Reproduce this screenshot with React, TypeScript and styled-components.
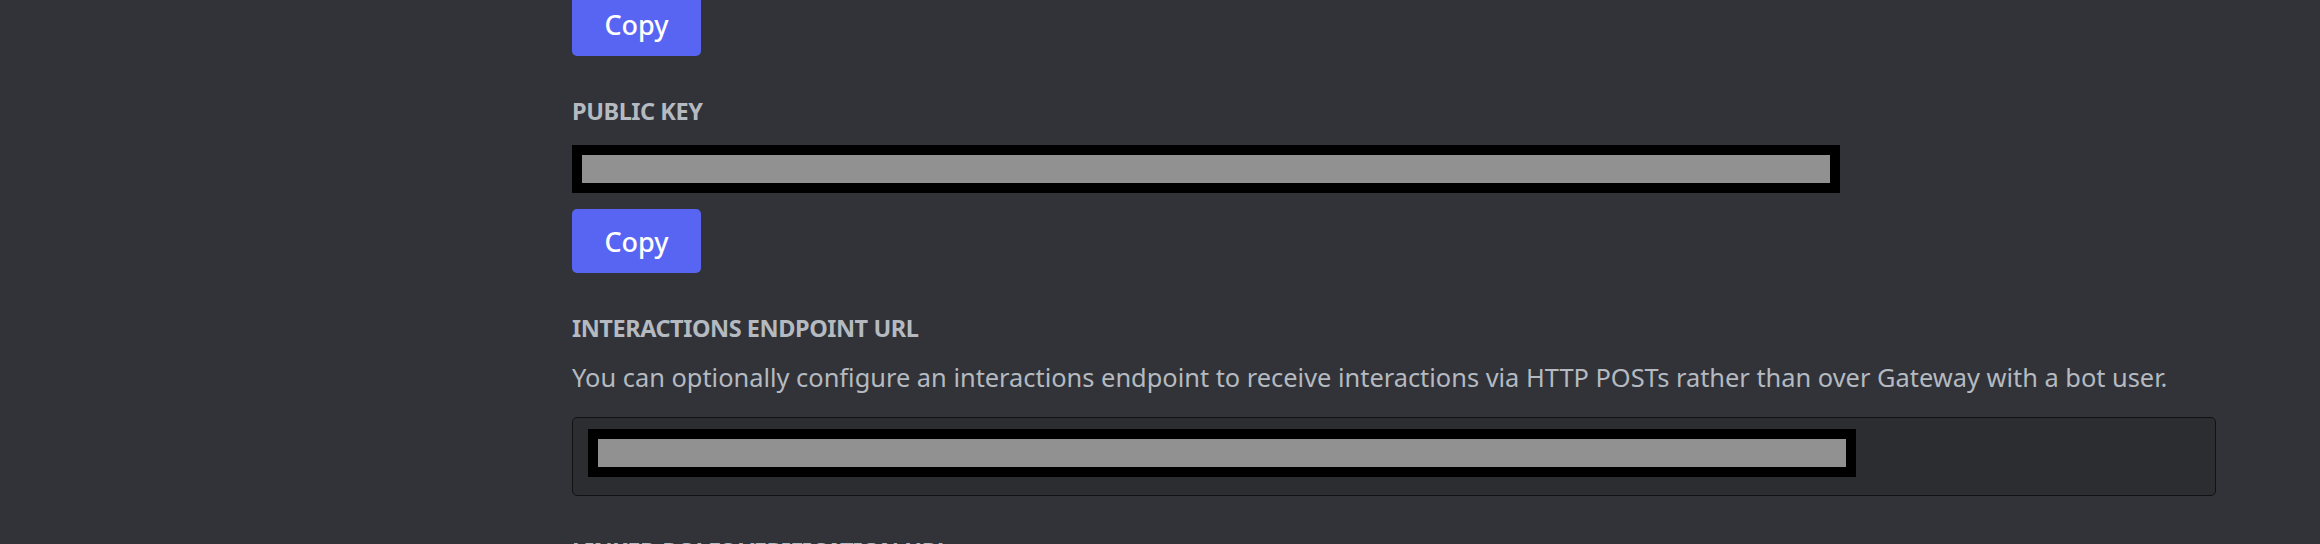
import React from 'react';
import styled, {createGlobalStyle} from "styled-components";

const GlobalStyle = createGlobalStyle`
    html, body {
        margin: 0;
        padding: 0;
        background: #313338;
    }
    body {
        font-family: "Noto Sans", "Liberation Sans", sans-serif;
        overflow: hidden;
    }
`

const Page = styled.main`
    min-height: 100vh;
    background: #313338;
    padding: 0 104px 0 572px;
    box-sizing: border-box;
    overflow: hidden;
`

const Content = styled.div`
    display: flex;
    flex-direction: column;
    align-items: stretch;
    margin-top: -8px;
`

const Field = styled.section`
    display: flex;
    flex-direction: column;
    align-items: flex-start;
    margin-top: 41px;
`

const Label = styled.h3`
    margin: 0;
    font-size: 23.5px;
    line-height: 28px;
    font-weight: 700;
    letter-spacing: -0.45px;
    color: #b5bac1;
    text-transform: uppercase;
    white-space: nowrap;
`

const Description = styled.p`
    margin: 19px 0 0;
    font-size: 25.4px;
    line-height: 32px;
    font-weight: 400;
    color: #b5bac1;
    white-space: nowrap;
`

const CopyButton = styled.button`
    width: 129px;
    height: 64px;
    padding: 0;
    border: none;
    border-radius: 5px;
    background: #5865f2;
    color: #ffffff;
    font-family: "Noto Sans", "Liberation Sans", sans-serif;
    font-size: 27px;
    font-weight: 500;
    cursor: pointer;
    margin-top: ${({$gap}: {$gap?: number}) => ($gap ?? 0)}px;
`

// black box with grey fill, covers the secret values in the screenshot
const Redacted = styled.div`
    width: 1268px;
    height: 48px;
    box-sizing: border-box;
    border: 10px solid #000000;
    background: #919191;
    flex-shrink: 0;
`

const KeyRow = styled.div`
    margin-top: 20px;
`

const InputShell = styled.div`
    align-self: stretch;
    margin-top: 24px;
    height: 79px;
    box-sizing: border-box;
    padding: 11px 15px 18px;
    border: 1px solid #111214;
    border-radius: 5px;
    background: #2b2d31;
    display: flex;
    align-items: flex-start;
`

export default function App() {
    return (
        <>
            <GlobalStyle/>
            <Page>
                <Content>
                    <CopyButton>Copy</CopyButton>

                    <Field>
                        <Label>Public Key</Label>
                        <KeyRow>
                            <Redacted/>
                        </KeyRow>
                        <CopyButton $gap={16}>Copy</CopyButton>
                    </Field>

                    <Field>
                        <Label>Interactions Endpoint URL</Label>
                        <Description>
                            You can optionally configure an interactions endpoint to receive interactions via HTTP POSTs rather than over Gateway with a bot user.
                        </Description>
                        <InputShell>
                            <Redacted/>
                        </InputShell>
                    </Field>

                    <Field>
                        <Label>Linked Roles Verification URL</Label>
                    </Field>
                </Content>
            </Page>
        </>
    );
}
